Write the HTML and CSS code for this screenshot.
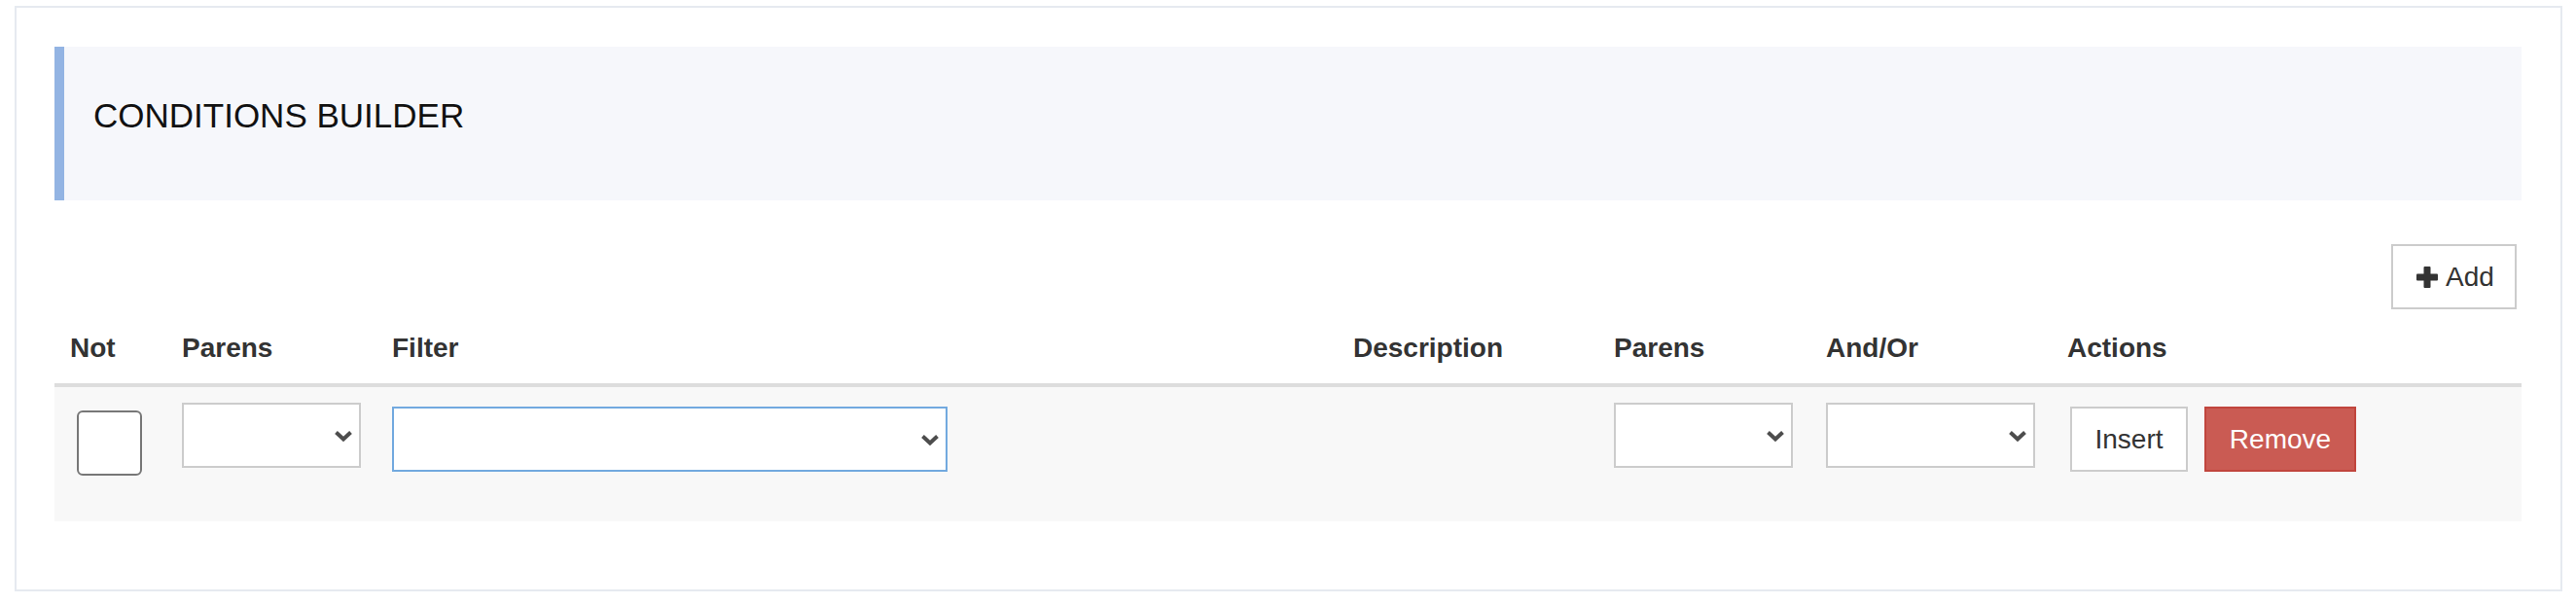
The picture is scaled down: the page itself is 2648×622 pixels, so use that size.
FILE: index.html
```html
<!DOCTYPE html>
<html lang="en">
<head>
<meta charset="utf-8">
<title>Conditions Builder</title>
<link rel="stylesheet" href="styles.css">
</head>
<body>
<div class="card">
  <div class="panel-heading">
    <h2 class="panel-title">CONDITIONS BUILDER</h2>
  </div>
  <div class="toolbar">
    <button class="btn btn-default btn-add" type="button">
      <svg class="icon-plus" width="22" height="22" viewBox="0 0 22 22" aria-hidden="true"><rect x="0" y="7.5" width="22" height="7" rx="1" fill="#333"/><rect x="7.5" y="0" width="7" height="22" rx="1" fill="#333"/></svg>
      <span>Add</span>
    </button>
  </div>
  <table class="conditions">
    <colgroup>
      <col class="c-not"><col class="c-parens"><col class="c-filter"><col class="c-desc"><col class="c-parens2"><col class="c-andor"><col class="c-actions">
    </colgroup>
    <thead>
      <tr>
        <th>Not</th>
        <th>Parens</th>
        <th>Filter</th>
        <th>Description</th>
        <th>Parens</th>
        <th>And/Or</th>
        <th>Actions</th>
      </tr>
    </thead>
    <tbody>
      <tr class="cond-row">
        <td><input class="check" type="checkbox"></td>
        <td>
          <span class="select-wrap w-parens">
            <select class="form-select"><option></option></select>
            <svg class="chev" width="20" height="12" viewBox="0 0 20 12" aria-hidden="true"><path d="M2.5 2.5 L10 9.5 L17.5 2.5" fill="none" stroke="#4d4d4d" stroke-width="4"/></svg>
          </span>
        </td>
        <td>
          <span class="select-wrap w-filter focused">
            <select class="form-select"><option></option></select>
            <svg class="chev" width="20" height="12" viewBox="0 0 20 12" aria-hidden="true"><path d="M2.5 2.5 L10 9.5 L17.5 2.5" fill="none" stroke="#4d4d4d" stroke-width="4"/></svg>
          </span>
        </td>
        <td></td>
        <td>
          <span class="select-wrap w-parens">
            <select class="form-select"><option></option></select>
            <svg class="chev" width="20" height="12" viewBox="0 0 20 12" aria-hidden="true"><path d="M2.5 2.5 L10 9.5 L17.5 2.5" fill="none" stroke="#4d4d4d" stroke-width="4"/></svg>
          </span>
        </td>
        <td>
          <span class="select-wrap w-andor">
            <select class="form-select"><option></option></select>
            <svg class="chev" width="20" height="12" viewBox="0 0 20 12" aria-hidden="true"><path d="M2.5 2.5 L10 9.5 L17.5 2.5" fill="none" stroke="#4d4d4d" stroke-width="4"/></svg>
          </span>
        </td>
        <td>
          <div class="actions">
            <button class="btn btn-default btn-insert" type="button">Insert</button>
            <button class="btn btn-danger" type="button">Remove</button>
          </div>
        </td>
      </tr>
    </tbody>
  </table>
</div>
</body>
</html>
```
FILE: styles.css
```css
* { box-sizing: border-box; }

html, body {
  margin: 0;
  padding: 0;
  background: #fff;
  font-family: "Liberation Sans", Arial, Helvetica, sans-serif;
  color: #333;
}

.card {
  margin: 6px 14px 0 15px;
  height: 602px;
  border: 2px solid #e6eaf0;
  padding: 40px 40px 0 39px;
  background: #fff;
}

.panel-heading {
  height: 158px;
  background: #f6f7fb;
  border-left: 10px solid #93b4e3;
  padding: 51px 0 0 30px;
}

.panel-title {
  margin: 0;
  font-size: 35px;
  line-height: 40px;
  font-weight: normal;
  color: #111;
}

.toolbar {
  display: flex;
  justify-content: flex-end;
  margin-top: 45px;
  margin-bottom: 4px;
  padding-right: 5px;
}

.btn {
  display: inline-flex;
  align-items: center;
  height: 67px;
  padding: 0 24px;
  font-family: "Liberation Sans", Arial, Helvetica, sans-serif;
  font-size: 28px;
  line-height: 39px;
  border: 2px solid #ccc;
  border-radius: 0;
  background: #fff;
  color: #333;
  cursor: pointer;
}

.btn-add {
  width: 129px;
  padding: 0 0 0 24px;
  gap: 8px;
}

.icon-plus { display: block; }

.btn-insert {
  width: 121px;
  justify-content: center;
  padding: 0;
}

.btn-danger {
  width: 156px;
  justify-content: center;
  padding: 0;
  background: #ca5b53;
  border-color: #c1453d;
  color: #fff;
}

.conditions {
  width: 100%;
  table-layout: fixed;
  border-collapse: separate;
  border-spacing: 0;
}

.c-not { width: 115px; }
.c-parens { width: 216px; }
.c-filter { width: 988px; }
.c-desc { width: 268px; }
.c-parens2 { width: 218px; }
.c-andor { width: 248px; }
.c-actions { width: 483px; }

.conditions th {
  padding: 16px;
  text-align: left;
  vertical-align: bottom;
  font-size: 28px;
  line-height: 40px;
  font-weight: bold;
  color: #333;
  border-bottom: 4px solid #ddd;
}

.cond-row { height: 138px; }

.cond-row td {
  padding: 16px;
  vertical-align: top;
  background: #f8f8f8;
}

.check {
  -webkit-appearance: none;
  appearance: none;
  display: block;
  width: 67px;
  height: 67px;
  margin: 8px 0 0 7px;
  border: 2px solid #777;
  border-radius: 6px;
  background: #fff;
}

.select-wrap {
  position: relative;
  display: block;
  height: 67px;
}

.w-parens { width: 184px; }
.w-filter { width: 571px; margin-top: 4px; }
.w-andor { width: 215px; }

.form-select {
  -webkit-appearance: none;
  appearance: none;
  display: block;
  width: 100%;
  height: 67px;
  border: 2px solid #ccc;
  border-radius: 0;
  background: #fff;
  font-family: "Liberation Sans", Arial, sans-serif;
  font-size: 28px;
  color: #333;
  outline: none;
}

.focused .form-select { border-color: #72a9df; }

.chev {
  position: absolute;
  right: 8px;
  top: 50%;
  margin-top: -6px;
  pointer-events: none;
}

.actions {
  display: flex;
  gap: 17px;
  margin: 4px 0 0 3px;
}
```
